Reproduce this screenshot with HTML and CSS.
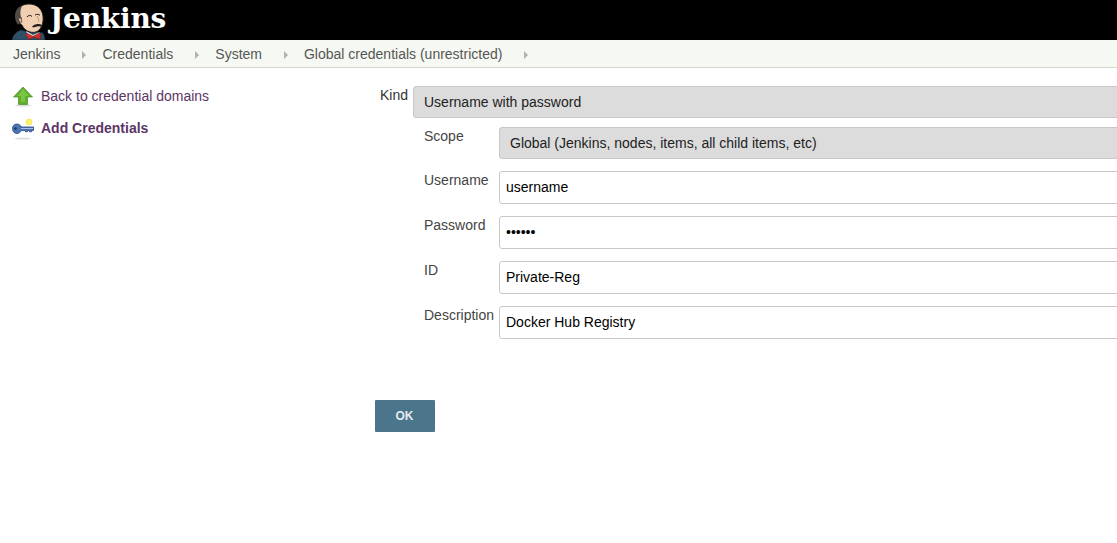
FILE: index.html
```html
<!DOCTYPE html>
<html lang="en">
<head>
<meta charset="utf-8">
<title>Jenkins</title>
<link rel="stylesheet" href="styles.css">
</head>
<body>
<header class="top">
  <svg class="butler" width="34" height="40" viewBox="0 0 34 40">
    <path d="M0 40c1-5 4-8 9-10l7 2 10 0 5 1c1 2 2 4 2 7z" fill="#2f4f66" stroke="#1c2f3d" stroke-width=".6"/>
    <path d="M4 15C4 8 10 4 17 4c7 0 13 4 14 12 .6 5-.5 10-3 13-2 3-6 4-10 3-4-1-7-4-8-7-2-1-6-5-6-10z" fill="#f0cfb2" stroke="#231f20" stroke-width="1"/>
    <path d="M6 25C2 20 2 12 6 8c1-1 3-2 4-2-2 4-2 8-1 11 1 0 1 2 0 3-1 2-2 4-3 5z" fill="#4d4a48"/>
    <path d="M9 18c-2-1-3 1-2 3 .5 1 2 2 3 1z" fill="#e8b997" stroke="#231f20" stroke-width=".6"/>
    <path d="M15 17c1-2 4-2 5-.5M23 15c2-1 4-1 5 .5" fill="none" stroke="#231f20" stroke-width="1"/>
    <path d="M25 16c1 2 2 4 2 6" fill="none" stroke="#b98d70" stroke-width=".8"/>
    <path d="M20 27c2-3 5-3 7-3 2 0 3 1 3 3-2-1-3-1-5-.5-2 .5-3 1-5 .5z" fill="#231f20"/>
    <path d="M15 33l6 2.500 6-2.500 2 1-1 5.500-6-2.500-5 2.500-3-4z" fill="#cc2f2c" stroke="#7a1512" stroke-width=".5"/>
    <path d="M14 31l7 4 7-3-1 1-6 3-6-3z" fill="#e8e8e8"/>
  </svg>
  <span class="wordmark">Jenkins</span>
</header>
<nav class="crumbs">
  <a class="crumb" href="#">Jenkins</a><span class="arrow"></span>
  <a class="crumb" href="#">Credentials</a><span class="arrow"></span>
  <a class="crumb" href="#">System</a><span class="arrow"></span>
  <a class="crumb" href="#">Global credentials (unrestricted)</a><span class="arrow"></span>
</nav>
<div class="page">
  <aside class="side">
    <a class="task" href="#">
      <svg class="task-icon" width="24" height="24" viewBox="0 0 24 24">
        <ellipse cx="12" cy="21.500" rx="8" ry="1.200" fill="#ddd"/>
        <path d="M12 3L21.500 13H16.500V20.500H7.500V13H2.500z" fill="#5faf2c" stroke="#4c8f28" stroke-width=".7"/>
        <path d="M12 5L18 12H14V18H10V12H6z" fill="#79c544"/>
      </svg>
      <span>Back to credential domains</span>
    </a>
    <a class="task task-active" href="#">
      <svg class="task-icon" width="24" height="24" viewBox="0 0 24 24">
        <ellipse cx="12" cy="22.500" rx="8" ry="1" fill="#ddd"/>
        <circle cx="18" cy="6" r="3" fill="#fdf36a" stroke="#f2e552" stroke-width=".8"/>
        <path d="M1.500 12.500C1.500 9.500 3.500 8 6 8c2 0 3.500 1.300 4.500 3H22.500v3.500H20.500v1.300h-2V14.500h-2v1.300h-2V14.500H10.500C9.500 16 8 17.500 6 17.500c-2.500 0-4.500-2-4.500-5z" fill="#4a74b4" stroke="#2c4a80" stroke-width=".8"/>
        <circle cx="4.500" cy="12.500" r="1.300" fill="#1d3460"/>
        <rect x="10" y="12" width="12" height="1" fill="#a9bfe0"/>
      </svg>
      <span>Add Credentials</span>
    </a>
  </aside>
  <main class="main">
    <form class="form">
      <div class="kind-row">
        <label class="kind-label">Kind</label>
        <select class="choice"><option>Username with password</option></select>
      </div>
      <div class="fields">
        <label class="field-label">Scope</label>
        <select class="choice"><option>Global (Jenkins, nodes, items, all child items, etc)</option></select>
        <label class="field-label">Username</label>
        <input class="text" type="text" value="username">
        <label class="field-label">Password</label>
        <input class="text" type="password" value="secret">
        <label class="field-label">ID</label>
        <input class="text" type="text" value="Private-Reg">
        <label class="field-label">Description</label>
        <input class="text" type="text" value="Docker Hub Registry">
      </div>
      <button class="ok" type="button">OK</button>
    </form>
  </main>
</div>
</body>
</html>
```
FILE: styles.css
```css
* { box-sizing: border-box; }
html, body { margin: 0; height: 100%; overflow: hidden; background: #fff; }
body { font-family: "Liberation Sans", Arial, sans-serif; font-size: 14px; color: #333; }

.top { height: 40px; background: #000; display: flex; align-items: flex-end; padding-left: 12px; }
.butler { display: block; flex: none; }
.wordmark { font-family: "DejaVu Serif", serif; font-weight: 700; font-size: 28px; line-height: 38px; color: #fff; margin-left: 4px; align-self: flex-start; letter-spacing: -.2px; }

.crumbs { height: 28px; background: #f6f8f3; border-bottom: 1px solid #d3d7cf; display: flex; align-items: center; padding-left: 13px; padding-top: 2px; }
.crumb { color: #555753; text-decoration: none; line-height: 25px; }
.arrow { width: 0; height: 0; border-left: 4px solid #b0b3ad; border-top: 4px solid transparent; border-bottom: 4px solid transparent; margin: 0 16px 0 22px; }

.page { display: flex; }
.side { width: 375px; flex: none; padding: 12px 0 0 11px; }
.task { display: flex; align-items: center; height: 32px; color: #5c3566; text-decoration: none; gap: 6px; }
.task-active { font-weight: 700; }
.task-icon { flex: none; }

.main { flex: none; width: 900px; padding: 18px 0 0 5px; }
.kind-row { display: flex; gap: 5px; }
.kind-label { width: 28px; flex: none; color: #333; padding-top: 1px; line-height: 16px; }
.choice { appearance: none; display: block; flex: 1; min-width: 0; width: 100%; height: 32px; background: #dcdcdc; border: 1px solid #c8c8c8; border-radius: 3px; padding: 0 10px; font: 14px "Liberation Sans", Arial, sans-serif; color: #222; }

.fields { display: grid; grid-template-columns: 75px 1fr; margin: 9px 0 0 44px; row-gap: 12px; }
.field-label { color: #444; padding-top: 1px; line-height: 16px; }
.text { display: block; width: 100%; height: 33px; border: 1px solid #c8c8c8; border-radius: 3px; padding: 0 6px 2px; font: 14px "Liberation Sans", Arial, sans-serif; color: #000; background: #fff; }

.ok { display: block; width: 60px; height: 32px; margin: 61px 0 0 -5px; background: #4b758b; border: 0; border-radius: 1px; color: #e6ebee; font: 700 12px "Liberation Sans", Arial, sans-serif; padding: 0 1px 0 0; }
```
